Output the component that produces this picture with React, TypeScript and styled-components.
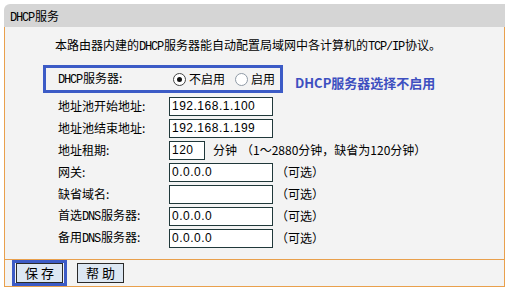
import React from "react";
import styled, { createGlobalStyle } from "styled-components";

const orange = "#e9a04c";
const frameBlue = "#3c5bc6";

const GlobalStyle = createGlobalStyle`
  html, body {
    margin: 0;
    padding: 0;
    background: #fff;
  }
  body {
    font-family: "Noto Sans CJK SC", "Liberation Sans", sans-serif;
    font-size: 12px;
    color: #000;
  }
`;

const Page = styled.div`
  padding: 4px 0 0 4px;
`;

const Panel = styled.div`
  width: 501px;
`;

const Header = styled.div`
  height: 23px;
  line-height: 23px;
  padding-left: 6px;
  background: #d5d5d5;
  border-radius: 6px 0 0 0;
  font-size: 12px;
`;

const Body = styled.div`
  background: #f3f3f3;
  border-left: 1px solid ${orange};
  border-right: 1px solid ${orange};
  padding: 10px 0 10px 38px;
`;

const Latin = styled.span`
  font-family: "Liberation Mono", monospace;
  font-size: 12px;
  letter-spacing: -1.2px;
  margin-right: 1px;
`;

const Description = styled.div`
  line-height: 16px;
  padding-left: 12px;
  margin-bottom: 10px;
`;

const HighlightRow = styled.div`
  display: flex;
  align-items: center;
`;

const HighlightBox = styled.div`
  box-sizing: border-box;
  width: 240px;
  height: 28px;
  border: 3px solid ${frameBlue};
  padding-left: 12px;
  display: flex;
  align-items: center;
`;

const Annotation = styled.div`
  margin: 7px 0 0 12px;
  color: #3d4fc0;
  font-weight: 700;
  font-size: 13px;
  line-height: 16px;
`;

const Label = styled.div`
  width: 111px;
  flex: none;
  line-height: 16px;
`;

const RadioOption = styled.label<{ $first?: boolean }>`
  display: inline-flex;
  align-items: center;
  margin-left: ${(p) => (p.$first ? "4px" : "10px")};
  line-height: 16px;
`;

const RadioDot = styled.span<{ $checked?: boolean }>`
  box-sizing: border-box;
  width: 13px;
  height: 13px;
  margin-right: 3px;
  border-radius: 50%;
  border: 1px solid ${(p) => (p.$checked ? "#444" : "#8f9aa6")};
  background: #fff;
  display: inline-flex;
  align-items: center;
  justify-content: center;

  &::after {
    content: "";
    width: 5px;
    height: 5px;
    border-radius: 50%;
    background: ${(p) => (p.$checked ? "#111" : "transparent")};
  }
`;

const Rows = styled.div`
  margin-top: 2px;
  padding-left: 15px;
`;

const Row = styled.div`
  height: 22px;
  display: flex;
  align-items: center;
`;

const Field = styled.input<{ $width?: number }>`
  box-sizing: border-box;
  width: ${(p) => p.$width ?? 104}px;
  height: 19px;
  margin: 0;
  padding: 0 2px;
  border: 1px solid #20383a;
  background: #fff;
  font-family: "Liberation Sans", sans-serif;
  font-size: 12px;
  letter-spacing: 0.5px;
  color: #000;
  outline: none;
`;

const Unit = styled.span`
  margin-left: 8px;
  line-height: 16px;
`;

const Hint = styled.span<{ $gap?: number }>`
  margin-left: ${(p) => p.$gap ?? 3}px;
  line-height: 16px;
`;

const Footer = styled.div`
  height: 26px;
  display: flex;
  align-items: center;
  padding-left: 7px;
  background: #f3f3f3;
  border: 1px solid ${orange};
`;

const SaveFrame = styled.div`
  border: 3px solid ${frameBlue};
  padding: 0 1px;
  display: flex;
`;

const Button = styled.button`
  box-sizing: border-box;
  width: 47px;
  height: 20px;
  margin: 0;
  padding: 0;
  border: 1px solid #2a2a2a;
  background: #dce7f3;
  font-family: "Noto Sans CJK SC", sans-serif;
  font-size: 13px;
  line-height: 18px;
  color: #000;
  white-space: pre;
`;

const HelpButton = styled(Button)`
  margin-left: 10px;
`;

const fields: { label: React.ReactNode; value: string }[] = [
  { label: "地址池开始地址:", value: "192.168.1.100" },
  { label: "地址池结束地址:", value: "192.168.1.199" },
];

const optional: { label: React.ReactNode; value: string }[] = [
  { label: "网关:", value: "0.0.0.0" },
  { label: "缺省域名:", value: "" },
  {
    label: (
      <>
        首选<Latin>DNS</Latin>服务器:
      </>
    ),
    value: "0.0.0.0",
  },
  {
    label: (
      <>
        备用<Latin>DNS</Latin>服务器:
      </>
    ),
    value: "0.0.0.0",
  },
];

export default function App() {
  return (
    <Page>
      <GlobalStyle />
      <Panel>
        <Header>
          <Latin>DHCP</Latin>服务
        </Header>
        <Body>
          <Description>
            本路由器内建的<Latin>DHCP</Latin>服务器能自动配置局域网中各计算机的
            <Latin>TCP/IP</Latin>协议。
          </Description>
          <HighlightRow>
            <HighlightBox>
              <Label>
                <Latin>DHCP</Latin>服务器:
              </Label>
              <RadioOption $first>
                <RadioDot $checked />
                不启用
              </RadioOption>
              <RadioOption>
                <RadioDot />
                启用
              </RadioOption>
            </HighlightBox>
            <Annotation>DHCP服务器选择不启用</Annotation>
          </HighlightRow>
          <Rows>
            {fields.map((f, i) => (
              <Row key={i}>
                <Label>{f.label}</Label>
                <Field readOnly defaultValue={f.value} />
              </Row>
            ))}
            <Row>
              <Label>地址租期:</Label>
              <Field readOnly defaultValue="120" $width={36} />
              <Unit>分钟</Unit>
              <Hint $gap={4}>（1～2880分钟，缺省为120分钟）</Hint>
            </Row>
            {optional.map((f, i) => (
              <Row key={i}>
                <Label>{f.label}</Label>
                <Field readOnly defaultValue={f.value} />
                <Hint>（可选）</Hint>
              </Row>
            ))}
          </Rows>
        </Body>
        <Footer>
          <SaveFrame>
            <Button>保 存</Button>
          </SaveFrame>
          <HelpButton>帮 助</HelpButton>
        </Footer>
      </Panel>
    </Page>
  );
}
